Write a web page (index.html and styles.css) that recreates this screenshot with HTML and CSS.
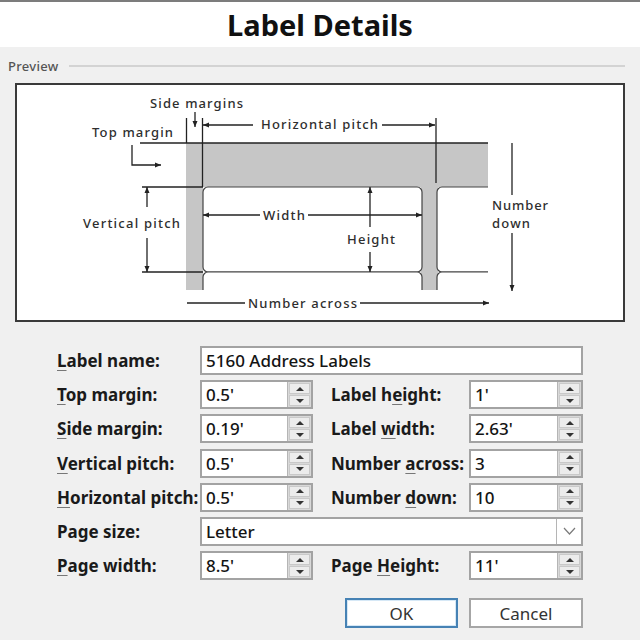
FILE: index.html
```html
<!DOCTYPE html>
<html lang="en">
<head>
<meta charset="utf-8">
<title>Label Details</title>
<link rel="stylesheet" href="styles.css">
</head>
<body>
<div class="dialog">
  <header class="titlebar"><h1 class="title">Label Details</h1></header>
  <main class="panel">
    <div class="legend"><span class="legend-text">Preview</span><span class="legend-line"></span></div>
    <div class="preview">
      <svg class="diagram" viewBox="17 85 606 235" xmlns="http://www.w3.org/2000/svg">
        <defs>
          <marker id="ah" viewBox="0 0 6 6" refX="6" refY="3" markerWidth="6" markerHeight="6" orient="auto" markerUnits="userSpaceOnUse">
            <path d="M0 0.5 L6 3 L0 5.5z" fill="#222"/>
          </marker>
          <clipPath id="sheet"><rect x="150" y="100" width="338" height="190"/></clipPath>
        </defs>
        <g clip-path="url(#sheet)">
          <rect x="186" y="143" width="302" height="44" fill="#c6c6c6"/>
          <rect x="186" y="143" width="17" height="147" fill="#c6c6c6"/>
          <rect x="421" y="180" width="17" height="110" fill="#c6c6c6"/>
          <rect x="203" y="187" width="219" height="85" rx="5" fill="#fff" stroke="#444" stroke-width="1.2"/>
          <rect x="437" y="187" width="90" height="85" rx="5" fill="#fff" stroke="#444" stroke-width="1.2"/>
          <rect x="203" y="272" width="219" height="85" rx="5" fill="#fff" stroke="#444" stroke-width="1.2"/>
          <rect x="437" y="272" width="90" height="85" rx="5" fill="#fff" stroke="#444" stroke-width="1.2"/>
        </g>
        <g fill="none" stroke="#222" stroke-width="1.3">
          <path d="M186 143 H488"/>
          <path d="M186.5 118 V143"/>
          <path d="M202.5 118 V187"/>
          <path d="M436 118 V183"/>
          <path d="M195 112 V127" marker-end="url(#ah)"/>
          <path d="M253 125 H203" marker-end="url(#ah)"/>
          <path d="M382 125 H435" marker-end="url(#ah)"/>
          <path d="M140 143 H186"/>
          <path d="M132 145 V165 H161" marker-end="url(#ah)"/>
          <path d="M142 187 H203"/>
          <path d="M142 272 H203"/>
          <path d="M147 207 V187" marker-end="url(#ah)"/>
          <path d="M147 238 V272" marker-end="url(#ah)"/>
          <path d="M260 215 H203" marker-end="url(#ah)"/>
          <path d="M308 215 H422" marker-end="url(#ah)"/>
          <path d="M370 227 V187" marker-end="url(#ah)"/>
          <path d="M370 252 V272" marker-end="url(#ah)"/>
          <path d="M512 143 V195"/>
          <path d="M512 233 V291" marker-end="url(#ah)"/>
          <path d="M187 303 H245"/>
          <path d="M360 303 H489" marker-end="url(#ah)"/>
        </g>
        <g class="dtext">
          <text x="150" y="108" textLength="93" lengthAdjust="spacing">Side margins</text>
          <text x="92" y="137" textLength="81" lengthAdjust="spacing">Top margin</text>
          <text x="261" y="129" textLength="117" lengthAdjust="spacing">Horizontal pitch</text>
          <text x="83" y="228" textLength="97" lengthAdjust="spacing">Vertical pitch</text>
          <text x="263" y="220" textLength="42" lengthAdjust="spacing">Width</text>
          <text x="347" y="244" textLength="48" lengthAdjust="spacing">Height</text>
          <text x="492" y="210" textLength="56" lengthAdjust="spacing">Number</text>
          <text x="492" y="228" textLength="38" lengthAdjust="spacing">down</text>
          <text x="248" y="308" textLength="109" lengthAdjust="spacing">Number across</text>
        </g>
      </svg>
    </div>

    <div class="form">
      <label class="lbl"><span><u>L</u>abel name:</span></label>
      <div class="field wide"><span class="val">5160 Address Labels</span></div>

      <label class="lbl"><span><u>T</u>op margin:</span></label>
      <div class="field"><span class="val">0.5'</span><span class="spin"><span class="up"></span><span class="down"></span></span></div>
      <label class="lbl lbl2"><span>Label h<u>e</u>ight:</span></label>
      <div class="field field2"><span class="val">1'</span><span class="spin"><span class="up"></span><span class="down"></span></span></div>

      <label class="lbl"><span><u>S</u>ide margin:</span></label>
      <div class="field"><span class="val">0.19'</span><span class="spin"><span class="up"></span><span class="down"></span></span></div>
      <label class="lbl lbl2"><span>Label <u>w</u>idth:</span></label>
      <div class="field field2"><span class="val">2.63'</span><span class="spin"><span class="up"></span><span class="down"></span></span></div>

      <label class="lbl"><span><u>V</u>ertical pitch:</span></label>
      <div class="field"><span class="val">0.5'</span><span class="spin"><span class="up"></span><span class="down"></span></span></div>
      <label class="lbl lbl2"><span>Number <u>a</u>cross:</span></label>
      <div class="field field2"><span class="val">3</span><span class="spin"><span class="up"></span><span class="down"></span></span></div>

      <label class="lbl"><span><u>H</u>orizontal pitch:</span></label>
      <div class="field"><span class="val">0.5'</span><span class="spin"><span class="up"></span><span class="down"></span></span></div>
      <label class="lbl lbl2"><span>Number <u>d</u>own:</span></label>
      <div class="field field2"><span class="val">10</span><span class="spin"><span class="up"></span><span class="down"></span></span></div>

      <label class="lbl"><span>Page size:</span></label>
      <div class="field wide"><span class="val">Letter</span><span class="dd"><svg width="13" height="8" viewBox="0 0 13 8"><polyline points="1,1 6.5,7 12,1" fill="none" stroke="#7a7a7a" stroke-width="1.2"/></svg></span></div>

      <label class="lbl"><span><u>P</u>age width:</span></label>
      <div class="field"><span class="val">8.5'</span><span class="spin"><span class="up"></span><span class="down"></span></span></div>
      <label class="lbl lbl2"><span>Page <u>H</u>eight:</span></label>
      <div class="field field2"><span class="val">11'</span><span class="spin"><span class="up"></span><span class="down"></span></span></div>
    </div>

    <div class="buttons">
      <button class="btn ok">OK</button>
      <button class="btn cancel">Cancel</button>
    </div>
  </main>
</div>
</body>
</html>
```

FILE: styles.css
```css
html, body {
  margin: 0;
  padding: 0;
  background: #ffffff;
  font-family: "Noto Sans", "DejaVu Sans", sans-serif;
}

.dialog {
  width: 640px;
  height: 640px;
  box-sizing: border-box;
  border-top: 2px solid #7c7c7c;
  display: flex;
  flex-direction: column;
  overflow: hidden;
}

.titlebar {
  height: 45px;
  flex: none;
  display: flex;
  justify-content: center;
  align-items: center;
  background: #ffffff;
}

.title {
  margin: 0;
  font-size: 29px;
  line-height: 45px;
  font-weight: 700;
  color: #111111;
}

.panel {
  flex: 1;
  background: #f0f0f0;
  padding-top: 10px;
}

.legend {
  display: flex;
  align-items: center;
  gap: 10px;
  height: 18px;
  padding: 0 15px 0 8px;
  margin-bottom: 8px;
}

.legend-text {
  font-size: 13px;
  font-weight: 500;
  color: #555555;
  letter-spacing: 0.3px;
}

.legend-line {
  flex: 1;
  height: 2px;
  background: #d3d3d3;
}

.preview {
  margin-left: 15px;
  width: 610px;
  height: 239px;
  box-sizing: border-box;
  border: 2px solid #3a3a3a;
  background: #ffffff;
}

.diagram {
  display: block;
  width: 606px;
  height: 235px;
}

.dtext text {
  font-family: "Noto Sans", sans-serif;
  font-size: 13px;
  font-weight: 500;
  fill: #2e2e2e;
}

.form {
  margin-top: 24px;
  padding-left: 57px;
  display: grid;
  grid-template-columns: 143px 113px 18px 138px 114px;
  grid-auto-rows: 29px;
  row-gap: 5.2px;
}

.lbl {
  grid-column: 1;
  display: flex;
  align-items: center;
  font-size: 17px;
  font-weight: 700;
  color: #1a1a1a;
  white-space: nowrap;
}

.lbl2 {
  grid-column: 4;
}

.lbl u {
  text-decoration-color: #777777;
  text-underline-offset: 3px;
}

.field {
  grid-column: 2;
  display: flex;
  box-sizing: border-box;
  border: 2px solid #a3a3a3;
  background: #ffffff;
  min-width: 0;
}

.field2 {
  grid-column: 5;
}

.wide {
  grid-column: 2 / 6;
}

.val {
  flex: 1;
  padding-left: 4px;
  font-size: 17px;
  font-weight: 500;
  line-height: 25px;
  color: #141414;
  white-space: nowrap;
  overflow: hidden;
}

.spin {
  width: 24px;
  flex: none;
  display: flex;
  flex-direction: column;
  box-sizing: border-box;
  border-left: 1px solid #b5b5b5;
  background: #d9d9d9;
  padding: 1px;
  gap: 1px;
}

.up, .down {
  flex: 1;
  display: flex;
  align-items: center;
  justify-content: center;
  background: #ececec;
  border: 1px solid #c9c9c9;
}

.up::after {
  content: "";
  border-left: 4px solid transparent;
  border-right: 4px solid transparent;
  border-bottom: 4px solid #333333;
}

.down::after {
  content: "";
  border-left: 4px solid transparent;
  border-right: 4px solid transparent;
  border-top: 4px solid #333333;
}

.dd {
  width: 24px;
  flex: none;
  display: flex;
  align-items: center;
  justify-content: center;
  border-left: 1px solid #b5b5b5;
  background: #ffffff;
}

.buttons {
  display: flex;
  justify-content: flex-end;
  gap: 11px;
  margin-top: 18px;
  padding-right: 57px;
}

.btn {
  height: 30px;
  box-sizing: border-box;
  background: #ffffff;
  font-family: "Noto Sans", sans-serif;
  font-size: 17px;
  color: #333333;
  padding: 0;
}

.ok {
  width: 113px;
  border: 2px solid #4682b4;
  box-shadow: inset 0 0 0 1px #d6e8f6;
}

.cancel {
  width: 114px;
  border: 2px solid #a6a6a6;
}
```
